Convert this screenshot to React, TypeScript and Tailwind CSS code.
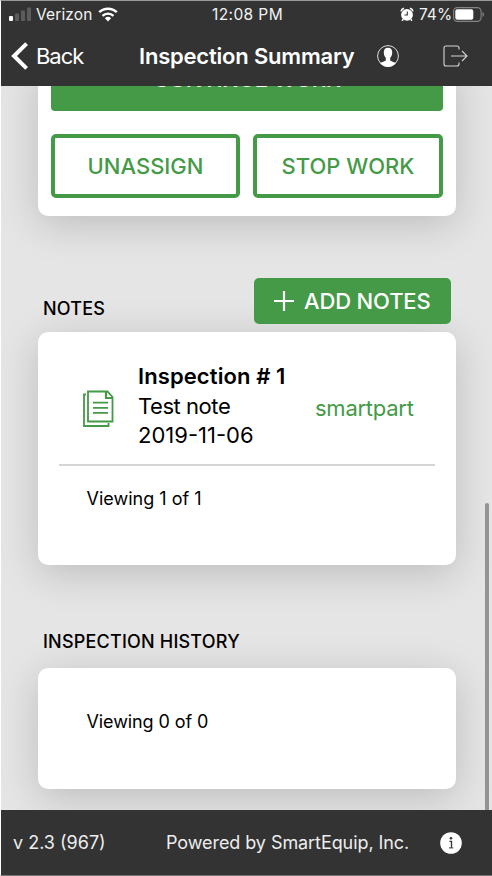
import React from 'react';

const card = 'bg-white rounded-[10px] shadow-[0_8px_40px_rgba(0,0,0,0.18)]';

function StatusBar() {
  return (
    <div className="flex h-[27px] items-center text-[16px] leading-[26px] text-[#f2f2f2]">
      <svg className="ml-[8px] shrink-0" width="22" height="15" viewBox="0 0 22 15">
        <rect x="0" y="9" width="4" height="5" rx="1" fill="#fff" />
        <rect x="6" y="6.5" width="4" height="7.5" rx="1" fill="#5c5c5c" />
        <rect x="12" y="3.5" width="4" height="10.5" rx="1" fill="#5c5c5c" />
        <rect x="18" y="0.5" width="4" height="13.5" rx="1" fill="#5c5c5c" />
      </svg>
      <span className="ml-[5px] w-[57px] whitespace-nowrap text-[15.5px] tracking-[0.15px]">Verizon</span>
      <svg className="ml-[5px] shrink-0" width="20" height="15" viewBox="0 0 20 15">
        <path d="M1.2 5.2a12.8 12.8 0 0 1 17.6 0" fill="none" stroke="#fff" strokeWidth="2.5" />
        <path d="M4.5 8.8a8 8 0 0 1 11 0" fill="none" stroke="#fff" strokeWidth="2.4" />
        <path d="M6.9 11.2a4.6 4.6 0 0 1 6.2 0L10 14.6Z" fill="#fff" />
      </svg>
      <span className="ml-[94px] w-[73px] whitespace-nowrap text-[15.5px] tracking-[0.4px]">12:08 PM</span>
      <svg className="ml-[115px] shrink-0" width="14" height="15" viewBox="0 0 14 15">
        <circle cx="7" cy="7.8" r="5.9" fill="#fff" />
        <path d="M1 4.3Q1.5 2 4 1.3M13 4.3Q12.5 2 10 1.3" fill="none" stroke="#fff" strokeWidth="1.5" />
        <path d="M3.3 12.3l-1.3 1.5M10.7 12.3l1.3 1.5" stroke="#fff" strokeWidth="1.5" />
        <path d="M7.3 4.5V8H4.5" stroke="#333" strokeWidth="1.1" fill="none" />
      </svg>
      <span className="ml-[5px] w-[33px] whitespace-nowrap text-[15.5px]">74%</span>
      <svg className="ml-[1px] shrink-0" width="32" height="15" viewBox="0 0 32 15">
        <rect x="0.6" y="0.6" width="27.5" height="13.8" rx="3.8" fill="none" stroke="#858585" strokeWidth="1.1" />
        <rect x="2.3" y="2.3" width="18" height="10.4" rx="2" fill="#fff" />
        <path d="M29.5 5v5q1.5-.8 1.5-2.5T29.5 5Z" fill="#858585" />
      </svg>
    </div>
  );
}

function NavBar() {
  return (
    <div className="flex h-[56px] items-center text-white">
      <svg className="ml-[10px] shrink-0" width="18" height="28" viewBox="0 0 18 28">
        <path d="M15.6 1.6 3 14l12.6 12.4" fill="none" stroke="#fff" strokeWidth="4" />
      </svg>
      <span className="ml-[7px] w-[50px] whitespace-nowrap text-[22px] tracking-[-1.05px]">Back</span>
      <span className="ml-[53px] w-[218px] whitespace-nowrap text-[22px] font-semibold tracking-[-0.2px]">Inspection Summary</span>
      <svg className="ml-[19px] shrink-0" width="24" height="24" viewBox="0 0 24 24">
        <circle cx="12" cy="12" r="10.4" fill="none" stroke="#ddd" strokeWidth="1" />
        <path d="M12 3.8c-3 0-4.2 1.9-4.2 4.5 0 2.4.7 4.2 2 5.500v2.400c-.4 1.200-4 1.500-5.700 3.100a10.400 10.400 0 0 0 15.800 0c-1.700-1.600-5.300-1.900-5.700-3.100v-2.400c1.300-1.300 2-3.100 2-5.500 0-2.600-1.200-4.500-4.200-4.500Z" fill="#fff" />
      </svg>
      <svg className="ml-[43px] shrink-0" width="26" height="22" viewBox="0 0 26 22">
        <path d="M16 4.5V3q0-2-2-2H3Q1 1 1 3v16q0 2 2 2h11q2 0 2-2v-1.5M8 11h16M19 6l5 5-5 5" fill="none" stroke="#d5d5d5" strokeWidth="1.1" />
      </svg>
    </div>
  );
}

function ActionsCard() {
  return (
    <section className={`${card} -mt-[21px] h-[151px] px-[13px]`}>
      <button className="flex h-[46px] w-full items-start justify-center rounded-[4px] bg-[#449a46] text-[22px] font-medium leading-[26px] text-white">
        <span className="mt-px whitespace-nowrap tracking-[-0.2px]">CONTINUE WORK</span>
      </button>
      <div className="mt-[23px] flex justify-between">
        <button className="h-[64px] w-[189px] rounded-[5px] border-4 border-[#449a46] text-[22px] font-medium text-[#449a46]">UNASSIGN</button>
        <button className="h-[64px] w-[190px] rounded-[5px] border-4 border-[#449a46] text-[22px] font-medium text-[#449a46]">STOP WORK</button>
      </div>
    </section>
  );
}

function NoteIcon() {
  return (
    <svg className="mt-[58px] ml-[45px] shrink-0" width="31" height="38" viewBox="0 0 31 38" fill="none" stroke="#449a46" strokeWidth="1.8">
      <path d="M3 4.5H1V36h24.5v-3" />
      <path d="M5 1.5h19.5l5 5.5v24.5H5Z" />
      <path d="M23 1.5V8h6.5" strokeWidth="2.2" />
      <path d="M10 12.7h15M10 17.8h15M10 22.9h15" />
    </svg>
  );
}

export default function App() {
  return (
    <div className="flex h-[876px] w-[492px] flex-col overflow-hidden border-y border-l border-t-[#999] border-b-[#777] border-l-white bg-[#e5e5e5] font-['Inter','Liberation_Sans',sans-serif] text-black">
      <header className="h-[85px] shrink-0 bg-[#333]">
        <StatusBar />
        <NavBar />
      </header>
      <main className="relative h-[724px] shrink-0 overflow-hidden pr-[36px] pl-[37px]">
        <ActionsCard />
        <div className="mt-[62px] flex h-[54px] justify-between pr-[5px] pl-[5px]">
          <h2 className="mt-[18px] whitespace-nowrap text-[18px] font-medium leading-[26px] tracking-[0.2px]">NOTES</h2>
          <button className="flex h-[46px] w-[197px] items-center rounded-[5px] bg-[#449a46] pl-[19px] text-[22px] font-medium text-white">
            <svg className="mr-[9px] shrink-0" width="22" height="22" viewBox="0 0 22 22">
              <path d="M11 1v20M1 11h20" stroke="#fff" strokeWidth="2.2" />
            </svg>
            <span className="whitespace-nowrap tracking-[-0.15px]">ADD NOTES</span>
          </button>
        </div>
        <section className={`${card} h-[233px]`}>
          <div className="mx-[21px] flex h-[134px] border-b-2 border-[#d5d5d5]">
            <div className="-ml-[21px] flex">
              <NoteIcon />
              <div className="mt-[30px] ml-[24px] w-[177px] text-[22px] leading-[29.5px]">
                <p className="font-semibold whitespace-nowrap tracking-[0.1px]">Inspection # 1</p>
                <p className="whitespace-nowrap tracking-[-0.45px]">Test note</p>
                <p className="whitespace-nowrap">2019-11-06</p>
              </div>
              <a className="mt-[61px] whitespace-nowrap text-[22px] leading-[30px] tracking-[-0.25px] text-[#449a46]">smartpart</a>
            </div>
          </div>
          <p className="mt-[20px] ml-[48.5px] text-[18px] leading-[26px]">Viewing 1 of 1</p>
        </section>
        <h2 className="mt-[64px] ml-[5px] h-[39px] whitespace-nowrap text-[18px] font-medium leading-[26px] tracking-[0.2px]">INSPECTION HISTORY</h2>
        <section className={`${card} h-[120.5px] pt-[41px]`}>
          <p className="ml-[48.5px] text-[18px] leading-[26px] tracking-[-0.1px]">Viewing 0 of 0</p>
        </section>
        <div className="absolute top-[417px] right-[3px] h-[330px] w-[4px] rounded-full bg-[#929493]" />
      </main>
      <footer className="flex h-[65px] shrink-0 items-center bg-[#333] text-[18px] text-[#ededed]">
        <span className="ml-[12px] w-[153px] whitespace-nowrap">v 2.3 (967)</span>
        <span className="w-[274px] whitespace-nowrap tracking-[-0.07px]">Powered by SmartEquip, Inc.</span>
        <svg width="22" height="22" viewBox="0 0 22 22">
          <circle cx="11" cy="11" r="10.8" fill="#fff" />
          <circle cx="11" cy="6.3" r="1.3" fill="#333" />
          <path d="M9.5 9.3h2v6.500" fill="none" stroke="#333" strokeWidth="1.3" />
          <path d="M9 15.900h4.300" stroke="#333" strokeWidth="1" />
        </svg>
      </footer>
    </div>
  );
}
